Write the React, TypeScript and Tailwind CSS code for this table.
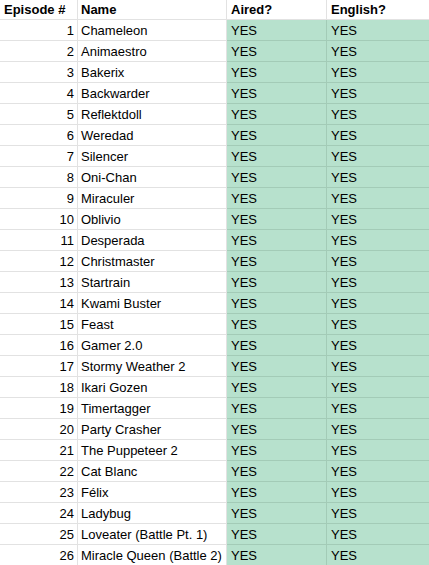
const episodes = [
  "Chameleon",
  "Animaestro",
  "Bakerix",
  "Backwarder",
  "Reflektdoll",
  "Weredad",
  "Silencer",
  "Oni-Chan",
  "Miraculer",
  "Oblivio",
  "Desperada",
  "Christmaster",
  "Startrain",
  "Kwami Buster",
  "Feast",
  "Gamer 2.0",
  "Stormy Weather 2",
  "Ikari Gozen",
  "Timertagger",
  "Party Crasher",
  "The Puppeteer 2",
  "Cat Blanc",
  "Félix",
  "Ladybug",
  "Loveater (Battle Pt. 1)",
  "Miracle Queen (Battle 2)",
]

export default function App() {
  return (
    <div
      className="w-[429px] h-[565px] overflow-hidden bg-white text-[13px] text-black"
      style={{ fontFamily: '"Liberation Sans", Arial, sans-serif' }}
    >
      {/* header row */}
      <div className="grid grid-cols-[78px_149px_100px_102px] h-[20px] font-bold">
        <div className="border-r border-b border-[#e2e2e2] pl-[4px] leading-[20px] overflow-hidden">Episode #</div>
        <div className="border-r border-b border-[#e2e2e2] pl-[3px] leading-[20px] overflow-hidden">Name</div>
        <div className="border-r border-b border-[#e2e2e2] pl-[4px] leading-[20px] overflow-hidden">Aired?</div>
        <div className="border-b border-[#e2e2e2] pl-[4px] leading-[20px] overflow-hidden">English?</div>
      </div>
      {episodes.map((name, i) => (
        <div key={i} className="grid grid-cols-[78px_149px_100px_102px] h-[21px]">
          <div className="border-r border-b border-[#e2e2e2] pr-[3px] text-right leading-[22px] overflow-hidden">{i + 1}</div>
          <div className="border-r border-b border-[#e2e2e2] pl-[3px] leading-[22px] whitespace-nowrap overflow-hidden">
            {name}
          </div>
          <div className="bg-[#b7e1cd] border-r border-b border-[#a3cbb7] pl-[4px] leading-[22px] overflow-hidden">YES</div>
          <div className="bg-[#b7e1cd] border-b border-[#a3cbb7] pl-[4px] leading-[22px] overflow-hidden">YES</div>
        </div>
      ))}
    </div>
  )
}
